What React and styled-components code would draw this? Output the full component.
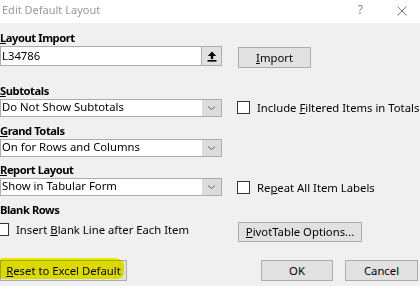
import React from "react";
import styled, { createGlobalStyle } from "styled-components";

const Global = createGlobalStyle`
  html, body { margin: 0; padding: 0; background: #f0f0f0; }
  body {
    width: 420px; height: 286px; overflow: hidden;
    font-family: "Noto Sans", "Open Sans", sans-serif;
    font-size: 11.3px; color: #000;
  }
  #root { height: 286px; }
`;

const Dialog = styled.div`
  display: flex;
  flex-direction: column;
  height: 286px;
  overflow: hidden;
`;

const TitleBar = styled.div`
  height: 23px;
  box-sizing: border-box;
  background: #fff;
  display: flex;
  align-items: flex-start;
  padding: 2px 13px 0 2px;
  color: #999;
  font-size: 11px;
  line-height: 15px;
`;

const Title = styled.div`
  flex: 1;
`;

const Help = styled.span`
  color: #8a8a8a;
  font-size: 12px;
  margin-right: 34px;
`;

const CloseIcon = styled.svg`
  margin-top: 4px;
`;

const Body = styled.div`
  flex: 1;
  display: flex;
  flex-direction: column;
  padding-top: 7px;
`;

const Row = styled.div`
  display: grid;
  grid-template-columns: 222px 1fr;
  column-gap: 16px;
  margin-top: ${(p) => p.$mt || 0}px;
`;

const Field = styled.div`
  display: flex;
  flex-direction: column;
`;

const Label = styled.div`
  font-weight: bold;
  font-size: 11.2px;
  letter-spacing: -0.45px;
  line-height: 15px;
  margin-bottom: ${(p) => (p.$mb === undefined ? 1 : p.$mb)}px;
`;

const U = styled.span`
  text-decoration: underline;
  text-underline-offset: 1px;
`;

const TextInput = styled.div`
  height: 20px;
  box-sizing: border-box;
  border: 1px solid #acacac;
  background: #fff;
  display: flex;
`;

const InputText = styled.div`
  flex: 1;
  line-height: 18px;
  padding-left: 1px;
`;

const InlineButton = styled.div`
  width: 20px;
  box-sizing: border-box;
  background: #e1e1e1;
  border-left: 1px solid #adadad;
  display: flex;
  align-items: center;
  justify-content: center;
`;

const Select = styled.div`
  height: 18px;
  box-sizing: border-box;
  border: 1px solid #acacac;
  background: #fff;
  display: flex;
`;

const SelectText = styled.div`
  flex: 1;
  line-height: 14px;
  padding-left: 1px;
  white-space: nowrap;
`;

const DropButton = styled.div`
  width: 19px;
  background: #dcdcdc;
  display: flex;
  align-items: center;
  justify-content: center;
`;

const Right = styled.div`
  margin-top: ${(p) => p.$mt || 0}px;
  margin-left: ${(p) => p.$ml || 0}px;
  align-self: start;
`;

const Button = styled.button`
  position: relative;
  width: ${(p) => p.$w}px;
  height: ${(p) => p.$h || 21}px;
  box-sizing: border-box;
  background: #e1e1e1;
  border: 1px solid #adadad;
  padding: 0;
  margin: 0;
  font: inherit;
  color: #000;
  line-height: 18px;
  white-space: nowrap;
`;

const CheckRow = styled.div`
  display: flex;
  align-items: center;
  gap: 7px;
  line-height: 15px;
  white-space: nowrap;
  margin-left: ${(p) => p.$ml || 0}px;
  margin-top: ${(p) => p.$mt || 0}px;
`;

const Box = styled.span`
  width: 13px;
  height: 13px;
  box-sizing: border-box;
  border: 1px solid #333;
  background: #fff;
  flex: none;
`;

const Footer = styled.div`
  margin-top: auto;
  display: flex;
  align-items: center;
  padding: 0 2px 5px 0;
  gap: 12px;
`;

const Spacer = styled.div`
  flex: 1;
`;

const Highlight = styled.span`
  position: absolute;
  left: -1px;
  top: -3px;
  width: 124px;
  height: 21px;
  background: #f8f800;
  mix-blend-mode: multiply;
  border-radius: 2px 10px 7px 3px / 2px 8px 6px 3px;
  pointer-events: none;
`;

const ButtonLabel = styled.span`
  position: relative;
`;

const Chevron = () => (
  <svg width="9" height="6" viewBox="0 0 9 6">
    <path d="M1 1.5 L4.5 4.5 L8 1.5" fill="none" stroke="#606060" strokeWidth="1" />
  </svg>
);

const UploadIcon = () => (
  <svg width="10" height="11" viewBox="0 0 10 11">
    <path d="M5 0.5 L9.2 5 L6.2 5 L6.2 8 L3.8 8 L3.8 5 L0.8 5 Z" fill="#000" />
    <rect x="0.5" y="9" width="9" height="1.6" fill="#000" />
  </svg>
);

export default function App() {
  return (
    <>
      <Global />
      <Dialog>
        <TitleBar>
          <Title>Edit Default Layout</Title>
          <Help>?</Help>
          <CloseIcon width="10" height="10" viewBox="0 0 10 10">
            <path d="M0.5 0.5 L9.5 9.5 M9.5 0.5 L0.5 9.5" stroke="#777" strokeWidth="1" fill="none" />
          </CloseIcon>
        </TitleBar>
        <Body>
          <Row>
            <Field>
              <Label><U>L</U>ayout Import</Label>
              <TextInput>
                <InputText>L34786</InputText>
                <InlineButton><UploadIcon /></InlineButton>
              </TextInput>
            </Field>
            <Right $mt={17}>
              <Button $w={73}><U>I</U>mport</Button>
            </Right>
          </Row>

          <Row $mt={15}>
            <Field>
              <Label><U>S</U>ubtotals</Label>
              <Select>
                <SelectText>Do Not Show Subtotals</SelectText>
                <DropButton><Chevron /></DropButton>
              </Select>
            </Field>
            <Right $mt={17} $ml={-1}>
              <CheckRow>
                <Box />
                <span>Include <U>F</U>iltered Items in Totals</span>
              </CheckRow>
            </Right>
          </Row>

          <Row $mt={6}>
            <Field>
              <Label><U>G</U>rand Totals</Label>
              <Select>
                <SelectText>On for Rows and Columns</SelectText>
                <DropButton><Chevron /></DropButton>
              </Select>
            </Field>
          </Row>

          <Row $mt={5}>
            <Field>
              <Label><U>R</U>eport Layout</Label>
              <Select>
                <SelectText>Show in Tabular Form</SelectText>
                <DropButton><Chevron /></DropButton>
              </Select>
            </Field>
            <Right $mt={18} $ml={-1}>
              <CheckRow>
                <Box />
                <span>Re<U>p</U>eat All Item Labels</span>
              </CheckRow>
            </Right>
          </Row>

          <Row $mt={6}>
            <Field>
              <Label $mb={0}>Blank Rows</Label>
              <CheckRow $ml={-4} $mt={5}>
                <Box />
                <span>Insert <U>B</U>lank Line after Each Item</span>
              </CheckRow>
            </Field>
            <Right $mt={20}>
              <Button $w={124} $h={20}><U>P</U>ivotTable Options...</Button>
            </Right>
          </Row>

          <Footer>
            <Button $w={127}>
              <ButtonLabel><U>R</U>eset to Excel Default</ButtonLabel>
              <Highlight />
            </Button>
            <Spacer />
            <Button $w={72}>OK</Button>
            <Button $w={73}>Cancel</Button>
          </Footer>
        </Body>
      </Dialog>
    </>
  );
}
